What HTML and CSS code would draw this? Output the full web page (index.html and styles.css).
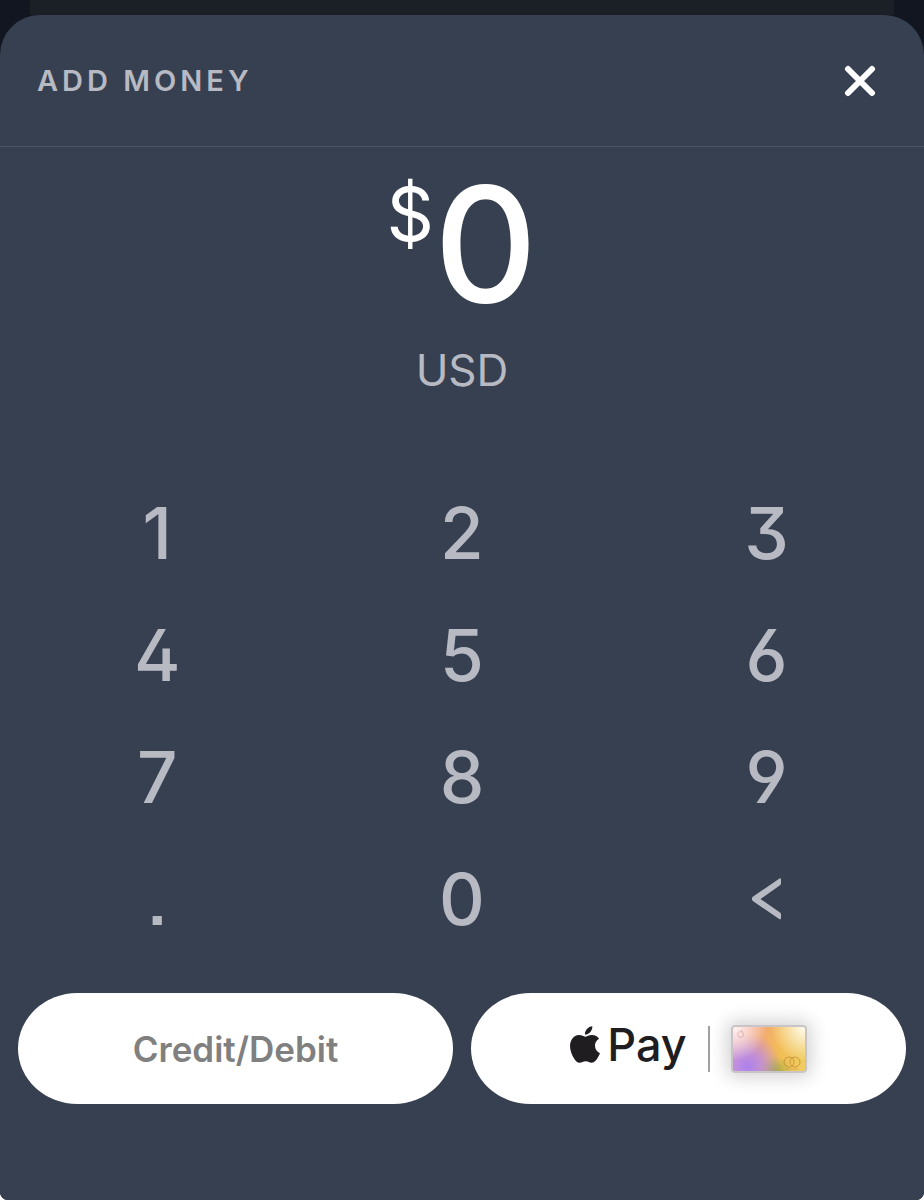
FILE: index.html
```html
<!DOCTYPE html>
<html lang="en">
<head>
<meta charset="utf-8">
<meta name="viewport" content="width=device-width, initial-scale=1">
<title>Add Money</title>
<link rel="stylesheet" href="styles.css">
</head>
<body>
<div class="screen">
  <div class="back-sheet"></div>
  <main class="sheet">
    <header class="header">
      <h1 class="title">ADD MONEY</h1>
      <button class="close" type="button" aria-label="Close">
        <svg viewBox="0 0 32 32" width="32" height="32" aria-hidden="true"><path d="M4 4 28 28M28 4 4 28" fill="none" stroke="#fff" stroke-width="6" stroke-linecap="round"/></svg>
      </button>
    </header>
    <section class="amount">
      <div class="value"><span class="currency">$</span><span class="digits">0</span></div>
      <div class="unit">USD</div>
    </section>
    <div class="keypad">
      <button class="key" type="button">1</button>
      <button class="key" type="button">2</button>
      <button class="key" type="button">3</button>
      <button class="key" type="button">4</button>
      <button class="key" type="button">5</button>
      <button class="key" type="button">6</button>
      <button class="key" type="button">7</button>
      <button class="key" type="button">8</button>
      <button class="key" type="button">9</button>
      <button class="key" type="button">.</button>
      <button class="key" type="button">0</button>
      <button class="key" type="button" aria-label="Delete">
        <svg viewBox="0 0 32 44" width="32" height="44" aria-hidden="true"><path d="M28.500 1.500Q30 .8 30 2.600V6.500Q30 7.500 29 8.200L9.500 22 29 35.500Q30 36.200 30 37.300V41Q30 43 28.200 42L2.500 24.500Q1 23.400 1 22.500V21Q1 20.300 2.500 19.200Z" fill="currentColor"/></svg>
      </button>
    </div>
    <div class="actions">
      <button class="pill" type="button">Credit/Debit</button>
      <button class="pill" type="button">
        <span class="wordmark">
          <svg viewBox="2.2 0 19.6 24" width="30" height="37" aria-hidden="true"><path fill="#1f1d20" d="M12.152 6.896c-.948 0-2.415-1.078-3.96-1.04-2.04.027-3.91 1.183-4.961 3.014-2.117 3.675-.546 9.103 1.519 12.09 1.013 1.454 2.208 3.09 3.792 3.039 1.52-.065 2.09-.987 3.935-.987 1.831 0 2.35.987 3.96.948 1.637-.026 2.676-1.48 3.676-2.948 1.156-1.688 1.636-3.325 1.662-3.415-.039-.013-3.182-1.221-3.22-4.857-.026-3.04 2.48-4.494 2.597-4.559-1.429-2.09-3.623-2.324-4.39-2.376-2-.156-3.675 1.09-4.61 1.09zM15.53 3.83c.843-1.012 1.4-2.427 1.245-3.83-1.207.052-2.662.805-3.532 1.818-.78.896-1.454 2.338-1.273 3.714 1.338.104 2.715-.688 3.559-1.701"/></svg>
          <span class="pay">Pay</span>
        </span>
        <span class="divider"></span>
        <span class="card">
          <svg viewBox="0 0 72 44" width="72" height="44" aria-hidden="true">
            <g transform="translate(4 3) scale(.3)" fill="none" stroke="#b58391" stroke-opacity=".6" stroke-width="2.500"><path d="M12.152 6.896c-.948 0-2.415-1.078-3.96-1.04-2.04.027-3.91 1.183-4.961 3.014-2.117 3.675-.546 9.103 1.519 12.09 1.013 1.454 2.208 3.09 3.792 3.039 1.52-.065 2.09-.987 3.935-.987 1.831 0 2.35.987 3.96.948 1.637-.026 2.676-1.48 3.676-2.948 1.156-1.688 1.636-3.325 1.662-3.415-3-1-3.500-6-.6-9.400-1.500-2-3.600-2.400-4.400-2.400-2-.156-3.675 1.090-4.610 1.090zM15.500 3.800 16.700 0"/></g>
            <g fill="none" stroke="#a5702c" stroke-opacity=".5"><circle cx="56" cy="35" r="5"/><circle cx="62" cy="35" r="5"/><path d="M53 42H65" stroke-opacity=".3"/></g>
          </svg>
        </span>
      </button>
    </div>
  </main>
</div>
</body>
</html>
```
FILE: styles.css
```css
* {
  box-sizing: border-box;
}

body {
  margin: 0;
  background: #fff;
  font-family: Inter, Roboto, sans-serif;
}

button {
  margin: 0;
  padding: 0;
  border: 0;
  background: none;
  font: inherit;
  color: inherit;
  cursor: pointer;
}

svg {
  display: block;
}

.screen {
  display: flex;
  flex-direction: column;
  min-height: 100vh;
  border-radius: 0 0 8px 8px;
  background: #121620;
  overflow: hidden;
}

.back-sheet {
  height: 15px;
  margin: 0 30px;
  background: #1b2027;
}

.sheet {
  flex: 1;
  border-radius: 40px 40px 0 0;
  background: #374050;
  color: #b7bac3;
}

.header {
  display: flex;
  align-items: center;
  justify-content: space-between;
  height: 132px;
  padding: 0 48px 0 37px;
  border-bottom: 1px solid #4b5464;
}

.title {
  margin: 0;
  font-size: 29px;
  font-weight: 600;
  letter-spacing: 4px;
}

.amount {
  padding-top: 17px;
  text-align: center;
}

.value {
  display: flex;
  justify-content: center;
  color: #fff;
}

.currency {
  padding-top: 10px;
  font-size: 74px;
  line-height: 80px;
}

.digits {
  font-size: 160px;
  font-weight: 500;
  line-height: 160px;
}

.unit {
  margin-top: 18px;
  font-size: 44px;
  line-height: 56px;
}

.keypad {
  display: grid;
  grid-template-columns: repeat(3, 1fr);
  grid-auto-rows: 122px;
  margin-top: 74px;
  padding: 0 5px;
  font-size: 71px;
  font-weight: 500;
  font-feature-settings: "cv09", "ss01", "ss07";
}

.key {
  display: flex;
  align-items: center;
  justify-content: center;
}

.actions {
  display: grid;
  grid-template-columns: 1fr 1fr;
  gap: 18px;
  padding: 33px 18px 96px;
}

.pill {
  display: flex;
  align-items: center;
  justify-content: center;
  height: 111px;
  border-radius: 60px / 56px;
  background: #fff;
  color: #808080;
  font-size: 35px;
  font-weight: 600;
}

.wordmark {
  display: flex;
  align-items: center;
  gap: 7px;
  padding-bottom: 8px;
}

.pay {
  color: #1f1d20;
  font-size: 45px;
  font-weight: 500;
  line-height: 46px;
}

.divider {
  width: 2px;
  height: 46px;
  margin: 0 21px;
  background: #a0a0a2;
}

.card {
  border: 2px solid #c9c4c8;
  border-radius: 4px;
  background:
    radial-gradient(circle at 100% 0, #fffdf0 0, #fff6d800 40%),
    radial-gradient(circle at 0 0, #fff4f2 0, #fbd5c800 40%),
    radial-gradient(circle at 20% 90%, #ae80ee 0, #b88ae8cc 20%, #d59ac000 48%),
    radial-gradient(circle at 58% 105%, #98a83c 0, #b8ac3c00 28%),
    linear-gradient(100deg, #f0b2b8 0, #f2aa74 38%, #f2bc55 62%, #f0cd60 100%);
  box-shadow: 0 0 18px 4px #0000002e;
}
```
